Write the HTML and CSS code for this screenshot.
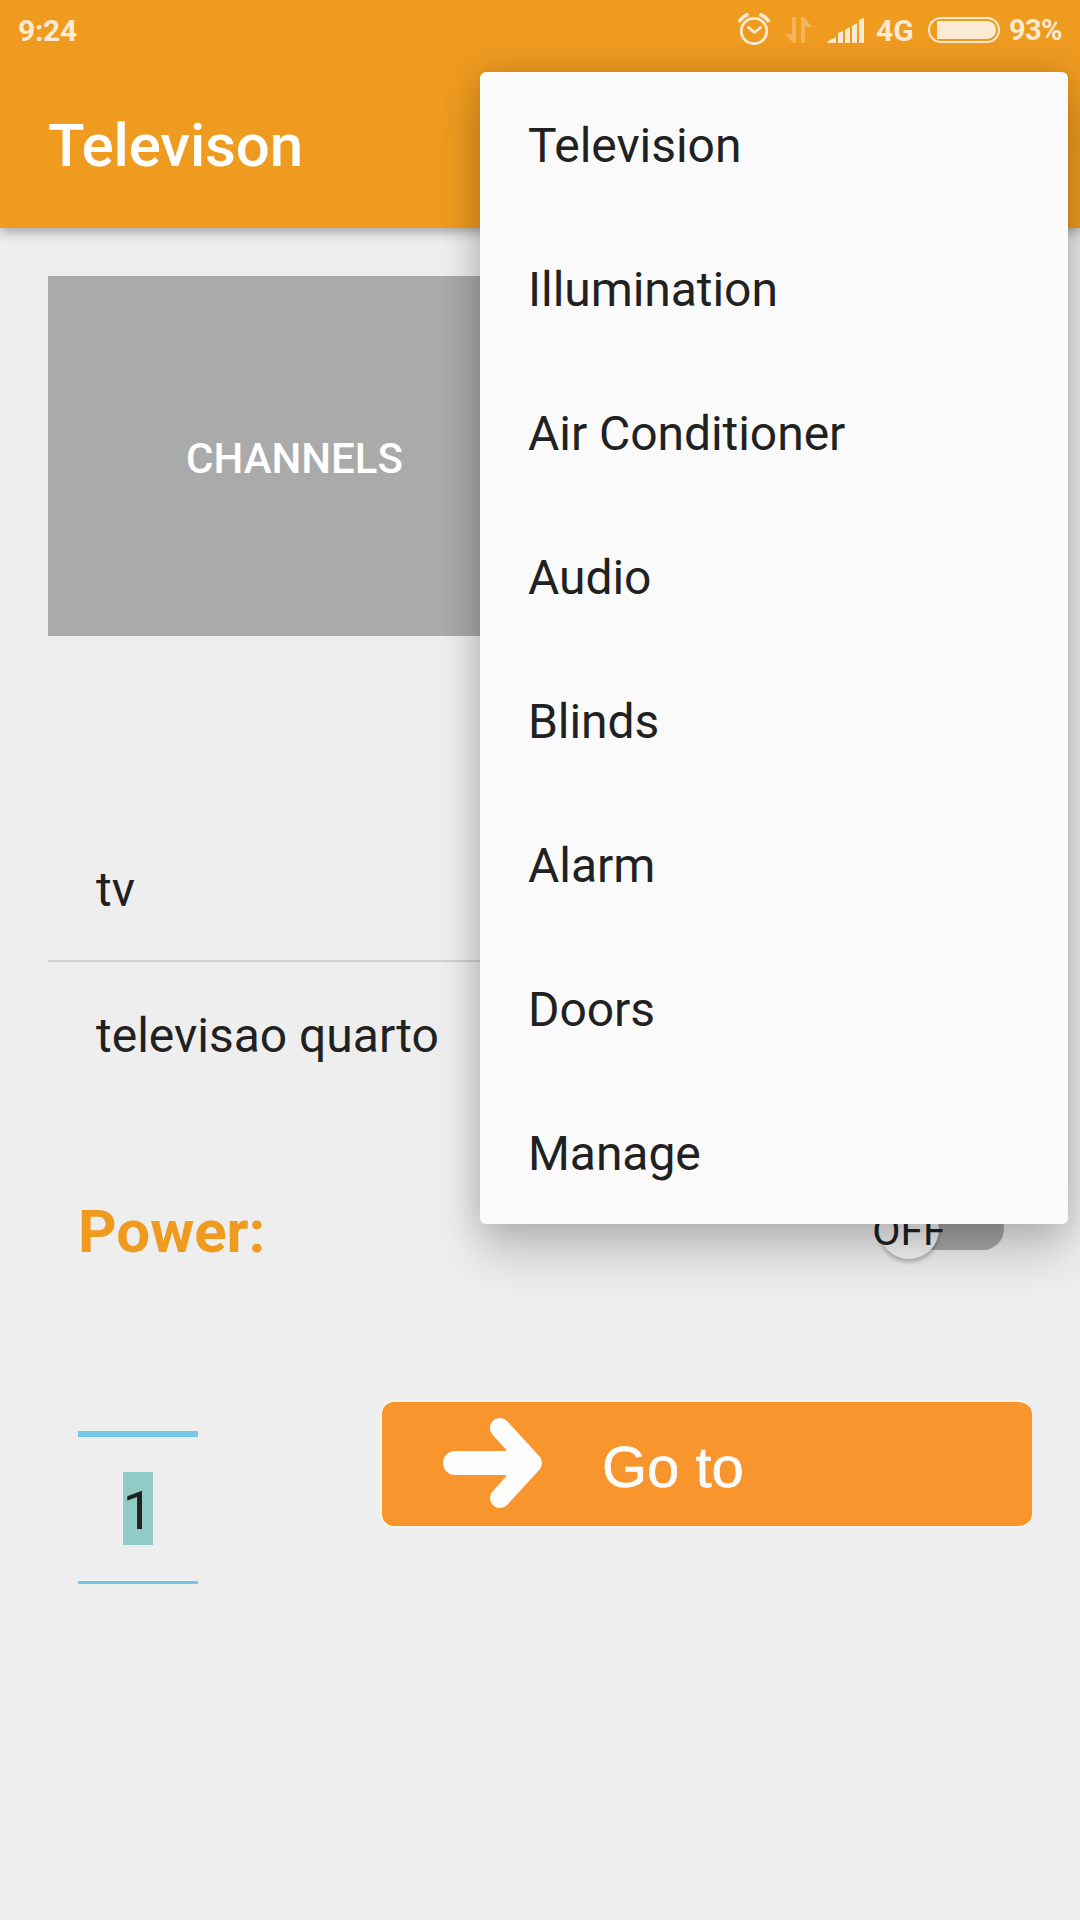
FILE: index.html
```html
<!DOCTYPE html>
<html lang="en">
<head>
<meta charset="utf-8">
<title>Televison</title>
<link rel="stylesheet" href="styles.css">
</head>
<body>
<header class="app-header">
  <div class="status-bar">
    <span class="status-text clock">9:24</span>
    <div class="status-icons">
      <svg width="36" height="60" viewBox="737 0 36 60" fill="none" stroke="currentColor">
        <circle cx="754" cy="31" r="12.7" stroke-width="2.8"/>
        <path d="M748.5 27.500l6 5 6-5" stroke-width="2.8" stroke-linecap="round" stroke-linejoin="round"/>
        <path d="M739 22q3-5.500 9.500-7.500M769 22q-3-5.500-9.500-7.500" stroke-width="3.600"/>
      </svg>
      <svg class="faded" width="29" height="60" viewBox="785 0 29 60" fill="currentColor">
        <path d="M792 17h4v26h-3l-8-9h7zM801 43V17h3l8 10h-7v16z"/>
      </svg>
      <svg width="38" height="60" viewBox="826 0 38 60" fill="currentColor">
        <path d="M827 43q0-2 9-6v6zM838 43V33l5-2v12zM845 43V30l5-3v16zM852 43V26l5-3v20zM859 43V20l5-2v25z"/>
      </svg>
      <span class="status-text network">4G</span>
      <svg width="72" height="60" viewBox="928 0 72 60">
        <rect x="929" y="18" width="70" height="24" rx="12" fill="none" stroke="currentColor" stroke-width="2"/>
        <path d="M937 21h50q9 1 9 9t-9 9h-50z" fill="currentColor"/>
      </svg>
      <span class="status-text percent">93%</span>
    </div>
  </div>
  <h1 class="title">Televison</h1>
</header>

<main class="content">
  <button class="channels">CHANNELS</button>
  <ul class="devices">
    <li>tv</li>
    <li>televisao quarto</li>
  </ul>
  <section class="power">
    <span class="power-label">Power:</span>
    <div class="switch">
      <div class="track"></div>
      <div class="thumb">OFF</div>
    </div>
  </section>
  <section class="tuner">
    <div class="picker"><span class="picked">1</span></div>
    <button class="goto">
      <svg width="102" height="94" viewBox="0 0 102 94" fill="none" stroke="currentColor" stroke-linecap="round" stroke-linejoin="round">
        <path d="M13 46H80" stroke-width="24"/>
        <path d="M58 11L90 46L58 81" stroke-width="20"/>
        <path d="M72 34L84 46L72 58" stroke-width="16"/>
      </svg>
      <span class="goto-text">Go to</span>
    </button>
  </section>
</main>

<nav class="menu">
  <a>Television</a>
  <a>Illumination</a>
  <a>Air Conditioner</a>
  <a>Audio</a>
  <a>Blinds</a>
  <a>Alarm</a>
  <a>Doors</a>
  <a>Manage</a>
</nav>
</body>
</html>
```
FILE: styles.css
```css
* { box-sizing: border-box; }

body {
  margin: 0;
  width: 1080px;
  height: 1920px;
  position: relative;
  overflow: hidden;
  display: flex;
  flex-direction: column;
  background: #eeeeee;
  color: #212121;
  font-family: Roboto, sans-serif;
  font-size: 48px;
}

button { border: 0; padding: 0; font-family: inherit; }

.app-header {
  height: 228px;
  background: #ef9b20;
  box-shadow: 0 3px 12px rgba(0, 0, 0, .36);
}

.status-bar {
  height: 60px;
  padding: 0 18px;
  display: flex;
  justify-content: space-between;
  color: #fdead2;
}
.status-icons { display: flex; gap: 12px; }
.faded { opacity: .32; }
.status-text {
  font-size: 30px;
  font-weight: 700;
  line-height: 61px;
}
.clock { letter-spacing: -.3px; }
.network { width: 40px; }
.percent {
  width: 53px;
  margin-left: -3px;
  white-space: nowrap;
  font-size: 29px;
  letter-spacing: -.6px;
}

.title {
  margin: 0;
  padding: 2px 48px 0;
  font-size: 60px;
  font-weight: 500;
  line-height: 168px;
  letter-spacing: -.15px;
  color: #fff;
}

.content { padding: 48px 48px 0; }

.channels {
  display: block;
  width: 493px;
  height: 360px;
  padding-top: 5px;
  background: #aaaaaa;
  color: #fff;
  font-size: 42px;
  font-weight: 500;
}

.devices {
  list-style: none;
  margin: 180px 0 0;
  padding: 0;
}
.devices li {
  height: 144px;
  padding: 2px 48px 0;
  line-height: 144px;
}
.devices li + li { border-top: 2px solid #d0d0d0; height: 146px; }

.power {
  height: 84px;
  margin: 82px 28px 0 30px;
  display: flex;
  justify-content: space-between;
}
.power-label {
  color: #ef9b20;
  font-size: 60px;
  font-weight: 700;
  line-height: 88px;
}
.switch { width: 126px; height: 84px; display: grid; }
.track, .thumb { grid-area: 1 / 1; }
.track {
  height: 42px;
  margin: 20px 0 0 5px;
  border-radius: 21px;
  background: #a8a8a8;
}
.thumb {
  width: 60px;
  height: 60px;
  margin: 11px 0 0 1px;
  border-radius: 50%;
  background: #f4f4f4;
  box-shadow: 0 3px 4px rgba(0, 0, 0, .26);
  display: flex;
  justify-content: center;
  font-size: 41px;
  line-height: 64px;
}

.tuner {
  margin-top: 128px;
  padding-left: 30px;
  display: flex;
  justify-content: space-between;
}
.picker {
  width: 120px;
  height: 153px;
  margin-top: 31px;
  padding-bottom: 2px;
  border-top: 6px solid #72c7e7;
  border-bottom: 3px solid #72c7e7;
  display: flex;
  justify-content: center;
  align-items: center;
}
.picked {
  height: 73px;
  background: #90cbc5;
  font-size: 54px;
  line-height: 78px;
}
.goto {
  width: 652px;
  height: 128px;
  border: solid #fdf6ec;
  border-width: 2px 0 2px 2px;
  border-radius: 14px;
  background: #f9952d;
  color: #fdfdfd;
  display: flex;
  align-items: center;
  padding-left: 60px;
  gap: 58px;
  font-family: "Liberation Sans", sans-serif;
  font-size: 58px;
  -webkit-text-stroke: .6px #fdfdfd;
}
.goto-text { padding-top: 4px; }

/* Overflow menu above the page */
.menu {
  position: absolute;
  top: 72px;
  right: 12px;
  width: 588px;
  background: #fafafa;
  border-radius: 6px;
  box-shadow: 0 34px 46px rgba(0, 0, 0, .15), 0 2px 36px rgba(0, 0, 0, .2);
}
.menu a {
  display: block;
  height: 144px;
  padding: 2px 48px 0;
  line-height: 144px;
  letter-spacing: -.05px;
}
```
